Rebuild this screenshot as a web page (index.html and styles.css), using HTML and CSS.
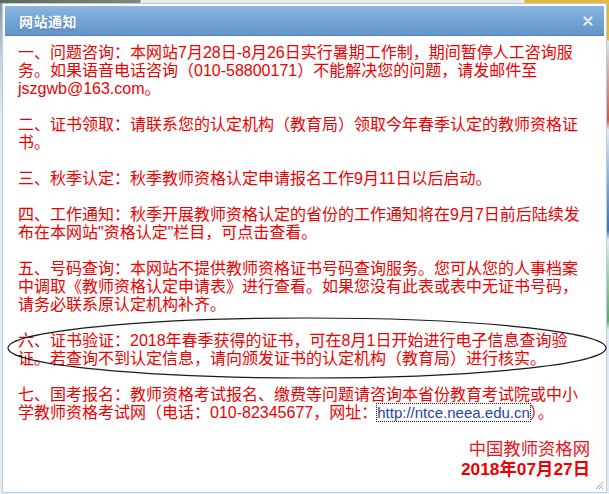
FILE: index.html
```html
<!DOCTYPE html>
<html lang="zh-CN">
<head>
<meta charset="utf-8">
<title>网站通知</title>
<link rel="stylesheet" href="styles.css">
</head>
<body>
<div class="dialog">
  <div class="titlebar">
    <span class="title">网站通知</span>
    <span class="close"><svg width="10" height="10" viewBox="0 0 10 10"><path d="M1.5 1.5 L8.5 8.5 M8.5 1.5 L1.5 8.5" stroke="#e4ebf2" stroke-width="2.4" stroke-linecap="round"/></svg></span>
  </div>
  <div class="content">
    <p>一、问题咨询：本网站7月28日-8月26日实行暑期工作制，期间暂停人工咨询服务。如果语音电话咨询（010-58800171）不能解决您的问题，请发邮件至jszgwb@163.com。</p>
    <p>二、证书领取：请联系您的认定机构（教育局）领取今年春季认定的教师资格证书。</p>
    <p>三、秋季认定：秋季教师资格认定申请报名工作9月11日以后启动。</p>
    <p>四、工作通知：秋季开展教师资格认定的省份的工作通知将在9月7日前后陆续发布在本网站"资格认定"栏目，可点击查看。</p>
    <p>五、号码查询：本网站不提供教师资格证书号码查询服务。您可从您的人事档案中调取《教师资格认定申请表》进行查看。如果您没有此表或表中无证书号码，请务必联系原认定机构补齐。</p>
    <p>六、证书验证：2018年春季获得的证书，可在8月1日开始进行电子信息查询验证。若查询不到认定信息，请向颁发证书的认定机构（教育局）进行核实。</p>
    <p>七、国考报名：教师资格考试报名、缴费等问题请咨询本省份教育考试院或中小学教师资格考试网（电话：010-82345677，网址：<a class="link" href="#">http://ntce.neea.edu.cn</a>）。</p>
    <div class="sign">
      <div class="sign-name">中国教师资格网</div>
      <div class="sign-date">2018年07月27日</div>
    </div>
  </div>
  <div class="grip"><svg width="10" height="10" viewBox="0 0 10 10"><path d="M9 2 L2 9 M9 5 L5 9 M9 8 L8 9" stroke="#9aa6b2" stroke-width="1"/></svg></div>
</div>
<svg class="oval" width="609" height="494" viewBox="0 0 609 494"><ellipse cx="307" cy="348" rx="299" ry="30" fill="none" stroke="#1a1a1a" stroke-width="1.2"/></svg>
</body>
</html>
```

FILE: styles.css
```css
html, body {
  margin: 0;
  padding: 0;
}
body {
  width: 609px;
  height: 494px;
  overflow: hidden;
  position: relative;
  background:
    linear-gradient(to right, #5d6a5c 0, #7d8a78 140px, #e9ecee 141px, #e9ecee 524px, #e7b73a 525px) top left / 609px 3px no-repeat,
    linear-gradient(to bottom, #7f95a8 0, #c7d3de 60px, #e6ebef 120px) left top / 3px 494px no-repeat,
    linear-gradient(to bottom, #e7b73a 0, #e7b73a 40px, #d9e4ee 41px, #d05a3a 120px, #e4ebf1 130px, #3d6fb0 230px, #e4ebf1 240px, #5aa860 320px, #e4ebf1 330px) right top / 2px 494px no-repeat,
    #eef1f4;
  font-family: "Liberation Sans", "Noto Sans CJK SC", sans-serif;
}
.dialog {
  position: relative;
  margin: 3px 2px 0 2px;
  width: 599px;
  height: 484px;
  border: 1px solid #b4cde3;
  padding: 2px 2px 2px 2px;
  background: #fff;
  display: flex;
  flex-direction: column;
}
.titlebar {
  height: 29px;
  flex: none;
  background: linear-gradient(to bottom, #8bb7e0 0%, #74a5d6 50%, #6294ca 100%);
  border-bottom: 1px solid #5385bb;
  display: flex;
  align-items: center;
  justify-content: space-between;
  padding: 0 11px 0 14px;
}
.title {
  color: #fff;
  font-weight: bold;
  font-size: 14px;
  letter-spacing: 0.5px;
  text-shadow: 0 1px 1px #4b76a3;
  font-family: "Noto Sans CJK SC", sans-serif;
}
.close {
  display: flex;
  width: 10px;
  height: 10px;
}
.content {
  padding: 8px 0 0 13px;
  width: 570px;
  color: #ee0000;
  font-size: 16px;
  line-height: 18px;
}
.content p {
  margin: 0 0 18px 0;
  padding-right: 4px;
}
.link {
  color: #2444a8;
  font-size: 15px;
  text-decoration: none;
  outline: 1px dotted #222;
  outline-offset: 0;
}
.sign {
  text-align: right;
  font-size: 17.33px;
  line-height: 20px;
  margin-top: -1px;
  margin-right: -2px;
}
.sign-name {
  color: #e8141c;
}
.sign-date {
  font-weight: bold;
}
.grip {
  position: absolute;
  right: 2px;
  bottom: 2px;
  width: 10px;
  height: 10px;
  display: flex;
}
.oval {
  position: absolute;
  left: 0;
  top: 0;
  pointer-events: none;
}
```
